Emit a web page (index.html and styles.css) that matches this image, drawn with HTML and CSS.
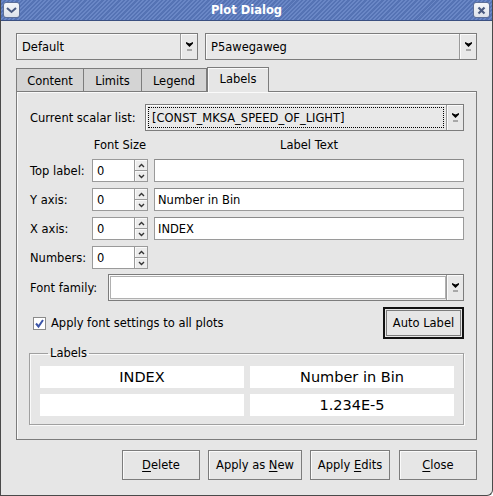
FILE: index.html
```html
<!DOCTYPE html>
<html>
<head>
<meta charset="utf-8">
<link rel="stylesheet" href="styles.css">
</head>
<body>
<div class="window">
  <div class="titlebar">
    <div class="tbtn"><svg width="11" height="7" viewBox="0 0 11 7"><path d="M1 1 L5.5 5 L10 1" fill="none" stroke="#4a5a80" stroke-width="2"/></svg></div>
    <div class="title">Plot Dialog</div>
    <div class="tbtn"><svg width="9" height="9" viewBox="0 0 9 9"><path d="M1.5 1.5 L7.5 7.5 M7.5 1.5 L1.5 7.5" fill="none" stroke="#4a5a80" stroke-width="2.2"/></svg></div>
  </div>
  <div class="body">
    <div class="toprow">
      <div class="combo w1"><span class="ctext">Default</span><span class="carrow"><svg width="7" height="9" viewBox="0 0 7 9"><polygon points="0,0 3.5,1.5 7,0 7,1.5 3.5,5 0,1.5" fill="#000"/><rect x="1" y="7" width="5" height="2" fill="#a8a8a8"/></svg></span></div>
      <div class="combo w2"><span class="ctext">P5awegaweg</span><span class="carrow"><svg width="7" height="9" viewBox="0 0 7 9"><polygon points="0,0 3.5,1.5 7,0 7,1.5 3.5,5 0,1.5" fill="#000"/><rect x="1" y="7" width="5" height="2" fill="#a8a8a8"/></svg></span></div>
    </div>
    <div class="tabs">
      <div class="tab t1">Content</div>
      <div class="tab t2">Limits</div>
      <div class="tab t3">Legend</div>
      <div class="tab sel t4">Labels</div>
    </div>
    <div class="panel">
      <div class="scalarrow">
        <span class="lbl slbl">Current scalar list:</span>
        <div class="combo focus"><span class="ctext"><span class="dots">[CONST_MKSA_SPEED_OF_LIGHT]</span></span><span class="carrow"><svg width="7" height="9" viewBox="0 0 7 9"><polygon points="0,0 3.5,1.5 7,0 7,1.5 3.5,5 0,1.5" fill="#000"/><rect x="1" y="7" width="5" height="2" fill="#a8a8a8"/></svg></span></div>
      </div>
      <div class="grid">
        <span></span><span class="hdr">Font Size</span><span class="hdr">Label Text</span>
        <span class="lbl">Top label:</span>
        <div class="spin"><span class="sval">0</span><span class="sbtns"><span class="sb"><svg width="7" height="5" viewBox="0 0 7 5"><path d="M1 4 L3.5 1.5 L6 4" fill="none" stroke="#333" stroke-width="1.4"/></svg></span><span class="sb"><svg width="7" height="5" viewBox="0 0 7 5"><path d="M1 1 L3.5 3.5 L6 1" fill="none" stroke="#333" stroke-width="1.4"/></svg></span></span></div>
        <div class="entry"></div>
        <span class="lbl">Y axis:</span>
        <div class="spin"><span class="sval">0</span><span class="sbtns"><span class="sb"><svg width="7" height="5" viewBox="0 0 7 5"><path d="M1 4 L3.5 1.5 L6 4" fill="none" stroke="#333" stroke-width="1.4"/></svg></span><span class="sb"><svg width="7" height="5" viewBox="0 0 7 5"><path d="M1 1 L3.5 3.5 L6 1" fill="none" stroke="#333" stroke-width="1.4"/></svg></span></span></div>
        <div class="entry">Number in Bin</div>
        <span class="lbl">X axis:</span>
        <div class="spin"><span class="sval">0</span><span class="sbtns"><span class="sb"><svg width="7" height="5" viewBox="0 0 7 5"><path d="M1 4 L3.5 1.5 L6 4" fill="none" stroke="#333" stroke-width="1.4"/></svg></span><span class="sb"><svg width="7" height="5" viewBox="0 0 7 5"><path d="M1 1 L3.5 3.5 L6 1" fill="none" stroke="#333" stroke-width="1.4"/></svg></span></span></div>
        <div class="entry">INDEX</div>
        <span class="lbl">Numbers:</span>
        <div class="spin"><span class="sval">0</span><span class="sbtns"><span class="sb"><svg width="7" height="5" viewBox="0 0 7 5"><path d="M1 4 L3.5 1.5 L6 4" fill="none" stroke="#333" stroke-width="1.4"/></svg></span><span class="sb"><svg width="7" height="5" viewBox="0 0 7 5"><path d="M1 1 L3.5 3.5 L6 1" fill="none" stroke="#333" stroke-width="1.4"/></svg></span></span></div>
        <span></span>
      </div>
      <div class="fontrow">
        <span class="lbl flbl">Font family:</span>
        <div class="combo white"><span class="ctext"></span><span class="carrow"><svg width="7" height="9" viewBox="0 0 7 9"><polygon points="0,0 3.5,1.5 7,0 7,1.5 3.5,5 0,1.5" fill="#000"/><rect x="1" y="7" width="5" height="2" fill="#a8a8a8"/></svg></span></div>
      </div>
      <div class="checkrow">
        <span class="check"><svg width="11" height="11" viewBox="0 0 11 11"><path d="M2 5.5 L4.5 8.5 L9 2" fill="none" stroke="#3c55a8" stroke-width="2"/></svg></span>
        <span class="lbl ctxt">Apply font settings to all plots</span>
        <div class="btn autobtn"><span>Auto Label</span></div>
      </div>
      <fieldset class="group">
        <legend>Labels</legend>
        <div class="cells">
          <div class="cell">INDEX</div>
          <div class="cell">Number in Bin</div>
          <div class="cell"></div>
          <div class="cell">1.234E-5</div>
        </div>
      </fieldset>
    </div>
    <div class="btnrow">
      <div class="btn b1"><span><u>D</u>elete</span></div>
      <div class="btn b2"><span>Apply as <u>N</u>ew</span></div>
      <div class="btn b3"><span>Apply <u>E</u>dits</span></div>
      <div class="btn b4"><span><u>C</u>lose</span></div>
    </div>
  </div>
</div>
</body>
</html>
```

FILE: styles.css
```css
html, body {
  margin: 0;
  padding: 0;
  background: #ffffff;
}
body {
  font-family: "DejaVu Sans", "Liberation Sans", sans-serif;
  font-size: 11.5px;
  color: #000;
}
.window {
  width: 493px;
  height: 496px;
  box-sizing: border-box;
  background: #e6e6e6;
  border: 1px solid #4a4a4a;
  border-top: none;
  border-bottom-right-radius: 6px;
  overflow: hidden;
}
.titlebar {
  height: 21px;
  box-sizing: border-box;
  display: flex;
  align-items: center;
  padding: 0 3px;
  margin: 0 -1px;
  border-bottom: 1px solid #3a4f80;
  background: repeating-linear-gradient(135deg, #5573b4 0px, #5573b4 1.6px, #6a87c6 1.6px, #6a87c6 3px);
}
.tbtn {
  width: 17px;
  height: 16px;
  box-sizing: border-box;
  border: 1px solid #5d6f98;
  border-radius: 3px;
  background: linear-gradient(#f4f6fa, #dde2ea);
  display: flex;
  align-items: center;
  justify-content: center;
}
.title {
  flex: 1;
  text-align: center;
  color: #fff;
  font-weight: bold;
  font-size: 11.5px;
}
.body {
  padding: 12px 15px 0 15px;
}
.toprow {
  display: flex;
  gap: 7px;
}
.combo {
  display: flex;
  height: 27px;
  box-sizing: border-box;
  border: 1px solid #7c7c7c;
  background: #e8e8e8;
  box-shadow: inset 1px 1px 0 #fafafa;
}
.combo .ctext {
  flex: 1;
  display: flex;
  align-items: center;
  padding-left: 5px;
  white-space: nowrap;
  overflow: hidden;
}
.combo .carrow {
  width: 16px;
  border-left: 1px solid #9a9a9a;
  box-shadow: inset 1px 0 0 #fafafa;
  display: flex;
  align-items: center;
  justify-content: center;
}
.w1 { width: 182px; }
.w2 { flex: 1; }
.tabs {
  display: flex;
  align-items: flex-end;
  margin-top: 7px;
  height: 24px;
  position: relative;
  z-index: 1;
}
.tab {
  height: 23px;
  box-sizing: border-box;
  border: 1px solid #7c7c7c;
  border-bottom: none;
  border-left: none;
  background: #d4d4d4;
  display: flex;
  align-items: center;
  justify-content: center;
  padding-top: 2px;
}
.t1 { width: 68px; border-left: 1px solid #7c7c7c; }
.t2 { width: 58px; }
.t3 { width: 65px; }
.t4 { width: 62px; }
.tab.sel {
  height: 25px;
  margin-bottom: -1px;
  background: #e6e6e6;
  border-left: 1px solid #7c7c7c;
  padding-top: 0;
  padding-bottom: 3px;
  box-shadow: inset 1px 1px 0 #fafafa;
}
.panel {
  height: 349px;
  box-sizing: border-box;
  border: 1px solid #7c7c7c;
  box-shadow: inset 1px 1px 0 #fafafa;
  padding: 12px 12px 0 13px;
}
.scalarrow {
  display: flex;
  align-items: center;
}
.slbl { width: 115px; }
.scalarrow .combo { flex: 1; }
.focus .ctext {
  padding: 2px;
}
.dots {
  flex: 1;
  height: 100%;
  box-sizing: border-box;
  border: 1px dotted #000;
  display: flex;
  align-items: center;
  padding-left: 3px;
}
.grid {
  display: grid;
  grid-template-columns: 56px 56px 1fr;
  grid-template-rows: 15px repeat(4, 23px);
  column-gap: 6px;
  row-gap: 6px;
  margin-top: 7px;
  align-items: center;
}
.grid .hdr {
  text-align: center;
  line-height: 15px;
}
.entry {
  height: 23px;
  box-sizing: border-box;
  border: 1px solid #9a9a9a;
  border-top-color: #8a8a8a;
  background: #fff;
  display: flex;
  align-items: center;
  padding-left: 3px;
}
.spin {
  display: flex;
  height: 23px;
}
.sval {
  width: 43px;
  box-sizing: border-box;
  border: 1px solid #9a9a9a;
  background: #fff;
  display: flex;
  align-items: center;
  padding-left: 4px;
}
.sbtns {
  width: 13px;
  display: flex;
  flex-direction: column;
}
.sb {
  flex: 1;
  box-sizing: border-box;
  border: 1px solid #9a9a9a;
  border-left: none;
  background: #ececec;
  box-shadow: inset 1px 1px 0 #fafafa;
  display: flex;
  align-items: center;
  justify-content: center;
}
.sb + .sb { border-top: none; }
.fontrow {
  display: flex;
  align-items: center;
  margin-top: 5px;
}
.flbl { width: 78px; }
.fontrow .combo { flex: 1; }
.combo.white .ctext {
  background: #fff;
  margin: 1px 0 1px 1px;
  border: 1px solid #b0b0b0;
}
.checkrow {
  display: flex;
  align-items: center;
  margin-top: 6px;
  height: 32px;
}
.check {
  width: 13px;
  height: 13px;
  box-sizing: border-box;
  border: 1px solid #8a8a8a;
  background: #fff;
  margin-left: 3px;
  margin-right: 5px;
  margin-top: 1px;
  display: flex;
  align-items: center;
  justify-content: center;
}
.ctxt { flex: 1; }
.btn {
  box-sizing: border-box;
  border: 1px solid #7c7c7c;
  background: #e6e6e6;
  box-shadow: inset 1px 1px 0 #fafafa;
  display: flex;
  align-items: center;
  justify-content: center;
  white-space: pre;
}
.autobtn {
  width: 81px;
  height: 32px;
  border: 2px solid #111;
  padding: 1px;
  box-shadow: none;
}
.autobtn span {
  flex: 1;
  align-self: stretch;
  display: flex;
  align-items: center;
  justify-content: center;
  border: 1px solid #7c7c7c;
}
.group {
  margin: 7px 0 0 -1px;
  padding: 6px 9px 8px 10px;
  border: 1px solid #a0a0a0;
  box-shadow: 1px 1px 0 #fafafa, inset 1px 1px 0 #fafafa;
  min-width: 0;
}
.group legend {
  padding: 0 2px;
  margin-left: 8px;
  line-height: 14px;
}
.cells {
  display: grid;
  grid-template-columns: 1fr 1fr;
  column-gap: 6px;
  row-gap: 6px;
  grid-auto-rows: 22px;
}
.cell {
  background: #fff;
  display: flex;
  align-items: center;
  justify-content: center;
  font-size: 14.5px;
}
.btnrow {
  display: flex;
  justify-content: flex-end;
  gap: 8px;
  margin-top: 10px;
}
.btnrow .btn { height: 30px; }
.b1 { width: 78px; }
.b2 { width: 94px; }
.b3 { width: 80px; margin-right: 1px; }
.b4 { width: 78px; }
u { text-decoration: underline; text-underline-offset: 2px; }
```
